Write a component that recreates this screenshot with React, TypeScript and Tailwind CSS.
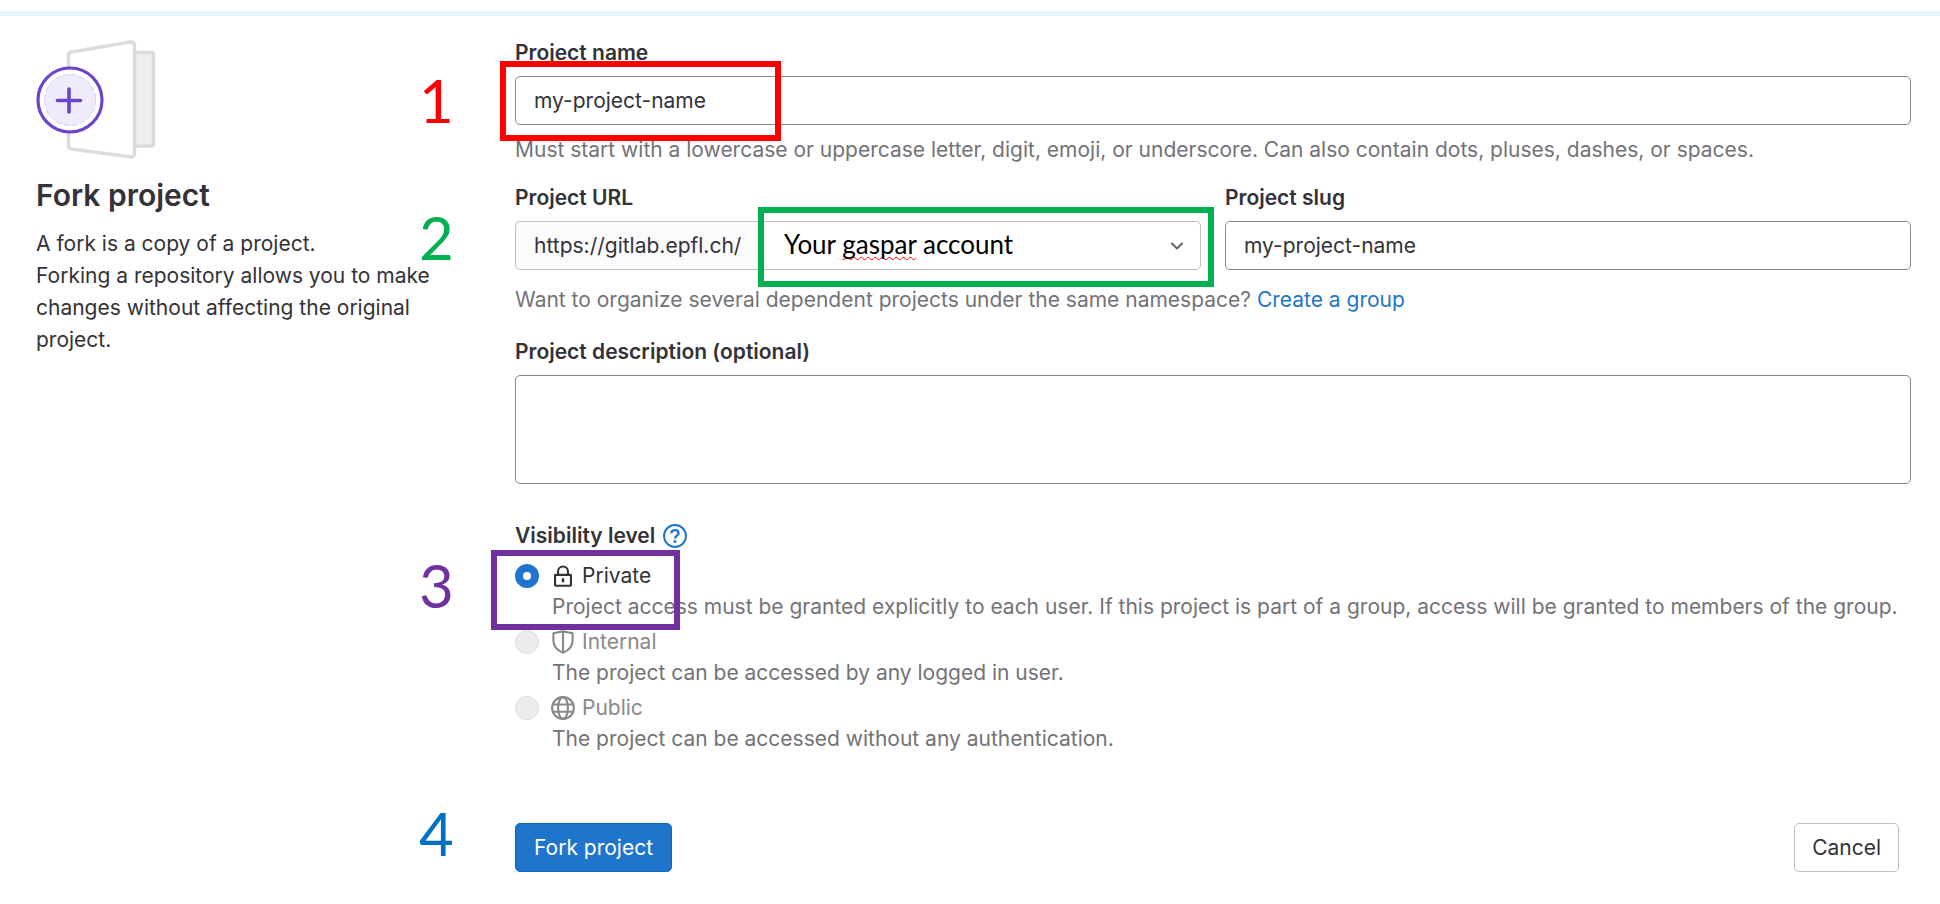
import { useState } from "react";
import type { ReactNode } from "react";

function ForkIllustration() {
  return (
    <svg className="block size-[120px] overflow-visible" viewBox="0 0 120 120" fill="none" aria-hidden="true">
      <rect x="96" y="12.500" width="21.500" height="93.500" rx="2" fill="#eee" stroke="#dcdcdc" strokeWidth="3.500" />
      <path d="M35.500 12 L94 2 Q98.500 1.500 98.500 6 V113 Q98.500 117.500 94 116.800 L35.500 109 Q32.500 108.500 32.500 105.500 V15 Q32.500 12.500 35.500 12 Z" fill="#fff" stroke="#dcdcdc" strokeWidth="3.500" strokeLinejoin="round" />
      <circle cx="34" cy="60" r="32" fill="#fff" stroke="#6b44c9" strokeWidth="3.200" />
      <circle cx="34" cy="60" r="25.500" fill="#f0ebfa" stroke="#d8c9f2" strokeDasharray="6 2" />
      <path d="M33 49 V72 M21.500 60.500 H44.500" stroke="#6b44c9" strokeWidth="3.600" strokeLinecap="round" />
    </svg>
  );
}

function LockIcon() {
  return (
    <svg className="size-6" viewBox="0 0 16 16" fill="currentColor" aria-hidden="true">
      <path fillRule="evenodd" clipRule="evenodd" d="M8 1a4 4 0 0 0-4 4v1.500H3a1 1 0 0 0-1 1V14a1.200 1.200 0 0 0 1.200 1.200h9.600A1.200 1.200 0 0 0 14 14V7.500a1 1 0 0 0-1-1h-1V5a4 4 0 0 0-4-4Zm2.600 5.500V5a2.600 2.600 0 0 0-5.200 0v1.500h5.200ZM3.400 8v5.800h9.200V8H3.400Z" />
      <path d="M7.200 9.500h1.600v2.700H7.200z" />
    </svg>
  );
}

function ShieldIcon() {
  return (
    <svg className="size-6" viewBox="0 0 16 16" fill="none" stroke="currentColor" strokeWidth="1.400" strokeLinejoin="round" aria-hidden="true">
      <path d="M8 .900 L14.400 2.200 V7 C14.400 10.500 12 13.500 8 15.200 C4 13.500 1.600 10.500 1.600 7 V2.200 Z M8 1 V15" />
    </svg>
  );
}

function GlobeIcon() {
  return (
    <svg className="size-6" viewBox="0 0 16 16" fill="none" stroke="currentColor" strokeWidth="1.400" aria-hidden="true">
      <circle cx="8" cy="8" r="7.250" />
      <ellipse cx="8" cy="8" rx="3.300" ry="7.250" />
      <path d="M1.500 5.700 H14.500 M1.500 10.500 H14.500" />
    </svg>
  );
}

function QuestionIcon() {
  return (
    <svg className="size-6" viewBox="0 0 16 16" fill="none" stroke="currentColor" strokeWidth="1.300" aria-hidden="true">
      <circle cx="8" cy="8" r="7.300" />
      <path d="M5.500 6.200 C5.700 4.700 6.800 4.100 8 4.100 C9.400 4.100 10.400 5 10.400 6.200 C10.400 7.700 8 7.800 8 9.600" strokeWidth="1.500" />
      <circle cx="8" cy="11.700" r="1" fill="currentColor" stroke="none" />
    </svg>
  );
}

function Step({ className, children }: { className: string; children: ReactNode }) {
  return (
    <span className={`absolute -left-24 font-[Lato,sans-serif] text-[60px] leading-[60px] ${className}`}>{children}</span>
  );
}

function Highlight({ className }: { className: string }) {
  return <span aria-hidden="true" className={`pointer-events-none absolute h-20 border-6 ${className}`} />;
}

const levels = [
  { id: "private", name: "Private", icon: <LockIcon />, help: "Project access must be granted explicitly to each user. If this project is part of a group, access will be granted to members of the group." },
  { id: "internal", name: "Internal", icon: <ShieldIcon />, help: "The project can be accessed by any logged in user." },
  { id: "public", name: "Public", icon: <GlobeIcon />, help: "The project can be accessed without any authentication." },
];

const field = "mt-[7px] block w-full rounded-[5px] border border-[#89888d] bg-white px-[18px] text-[#333238]";

export default function App() {
  const [name, setName] = useState("my-project-name");
  const [slug, setSlug] = useState("my-project-name");

  return (
    <div className="min-h-screen bg-white pt-[11px] font-[Inter,sans-serif] text-[21px] leading-8 text-[#333238]">
      <div className="h-[5px] bg-[#e9f3fc]" />
      <main className="flex gap-[79px] pr-[29px] pl-9">
        <aside className="w-[400px] shrink-0 pt-6">
          <ForkIllustration />
          <h1 className="mt-4 text-[30px] leading-[38px] font-semibold">Fork project</h1>
          <p className="mt-[14px]">
            A fork is a copy of a project.
            <br />
            Forking a repository allows you to make changes without affecting the original project.
          </p>
        </aside>

        <form className="min-w-0 flex-1 pt-[21px]" onSubmit={(e) => e.preventDefault()}>
          <div>
            <label htmlFor="name" className="block font-semibold">Project name</label>
            <div className="relative">
              <input id="name" value={name} onChange={(e) => setName(e.target.value)} className={`h-[49px] ${field}`} />
              <Highlight className="-top-[15px] -left-[15px] w-[281px] border-[#ff0000]" />
              <Step className="-top-[6px] text-[#ff0000]">1</Step>
            </div>
            <p className="mt-[9px] text-[#737278]">
              Must start with a lowercase or uppercase letter, digit, emoji, or underscore. Can also contain dots, pluses, dashes, or spaces.
            </p>
          </div>

          <div className="mt-4 flex gap-6">
            <div className="w-[686px] shrink">
              <label htmlFor="namespace" className="block font-semibold">Project URL</label>
              <div className="relative mt-[7px] flex h-[49px]">
                <span className="flex w-[243px] shrink-0 items-center rounded-l-[5px] border border-r-0 border-[#bfbfc3] bg-[#fbfafd] pl-[18px]">
                  https://gitlab.epfl.ch/
                </span>
                <button id="namespace" type="button" className="flex flex-1 items-center justify-between rounded-r-[5px] border border-l-0 border-[#bfbfc3] bg-white pr-[15px] pl-[26px] font-[Lato,sans-serif] text-[26px] text-black">
                  <span className="pb-1">
                    Your <span className="underline decoration-[#ff0000] decoration-wavy decoration-1 underline-offset-2 [text-decoration-skip-ink:none]">gaspar</span> account
                  </span>
                  <svg className="size-4" viewBox="0 0 16 16" fill="none" stroke="#626168" strokeWidth="2" strokeLinecap="round" strokeLinejoin="round" aria-hidden="true">
                    <path d="M3 5.500 L8 10.500 L13 5.500" />
                  </svg>
                </button>
                <Highlight className="-top-[14px] left-[243px] w-[456px] border-[#00b050]" />
                <Step className="-top-[14px] text-[#00b050]">2</Step>
              </div>
            </div>
            <div className="min-w-0 flex-1">
              <label htmlFor="slug" className="block font-semibold">Project slug</label>
              <input id="slug" value={slug} onChange={(e) => setSlug(e.target.value)} className={`h-[49px] ${field}`} />
            </div>
          </div>
          <p className="mt-[14px] text-[#737278]">
            Want to organize several dependent projects under the same namespace?{" "}
            <a href="#group" className="text-[#1f75cb]">Create a group</a>
          </p>

          <div className="mt-5">
            <label htmlFor="description" className="block font-semibold">Project description (optional)</label>
            <textarea id="description" className={`h-[109px] resize-none ${field}`} />
          </div>

          <fieldset className="mt-9">
            <legend className="flex items-center gap-2 font-semibold">
              Visibility level
              <a href="#help" aria-label="Visibility help" className="text-[#1f75cb]"><QuestionIcon /></a>
            </legend>
            <div className="relative mt-2 flex flex-col gap-1 leading-[31px]">
              {levels.map((level, i) => (
                <div key={level.id}>
                  <div className="flex items-center">
                    <input
                      id={level.id}
                      type="radio"
                      name="visibility"
                      defaultChecked={i === 0}
                      disabled={i > 0}
                      className="size-6 shrink-0 appearance-none rounded-full border border-[#dcdcde] bg-[#ececef] checked:border-8 checked:border-[#1f75cb] checked:bg-white"
                    />
                    <label htmlFor={level.id} className={`ml-3 flex items-center gap-[7px] ${i > 0 ? "text-[#89888d]" : ""}`}>
                      {level.icon}
                      {level.name}
                    </label>
                  </div>
                  <p className="pl-[37px] text-[#737278]">{level.help}</p>
                </div>
              ))}
              <Highlight className="-top-[10px] -left-6 w-[189px] border-[#7030a0]" />
              <Step className="-top-[5px] text-[#7030a0]">3</Step>
            </div>
          </fieldset>

          <div className="relative mt-[69px] flex justify-between pr-3">
            <button type="submit" className="h-[49px] rounded-[5px] border border-[#1068bf] bg-[#1f75cb] px-[18px] text-white">Fork project</button>
            <button type="button" className="h-[49px] rounded-[5px] border border-[#bfbfc3] bg-white px-[17px]">Cancel</button>
            <Step className="-top-5 text-[#0070c0]">4</Step>
          </div>
        </form>
      </main>
    </div>
  );
}
